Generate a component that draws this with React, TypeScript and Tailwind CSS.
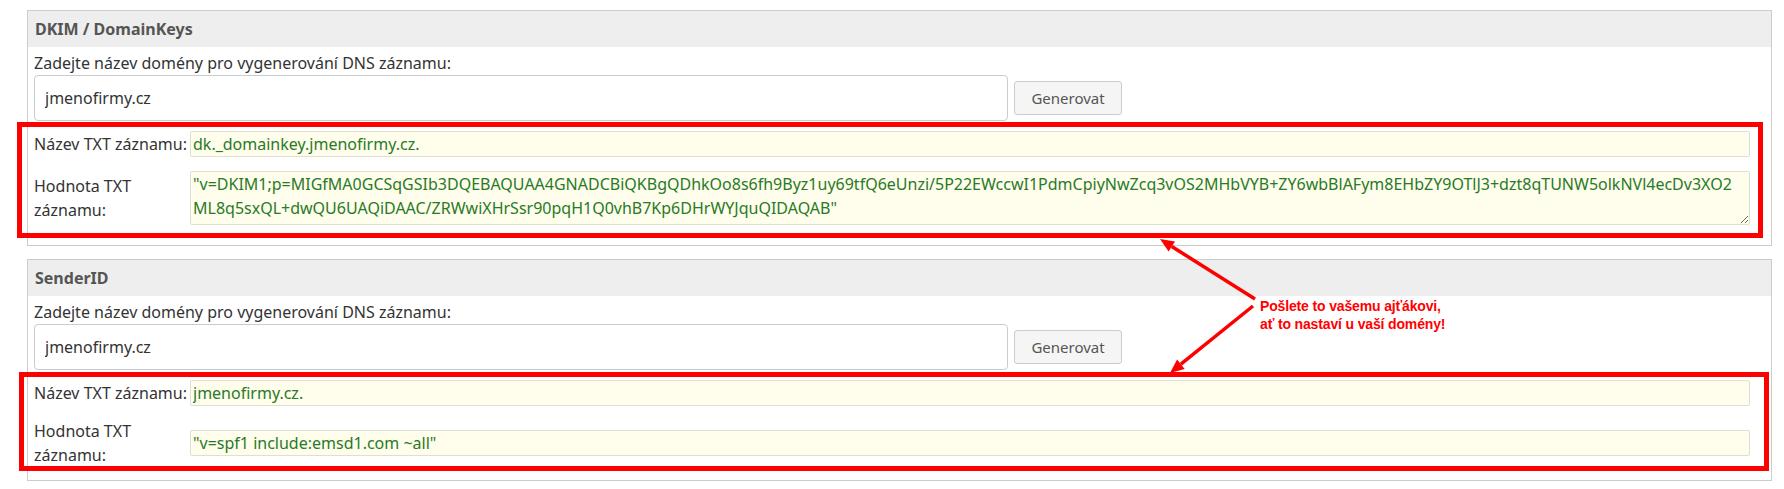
import React from 'react';

const DKIM_LINE_1 =
    '"v=DKIM1;p=MIGfMA0GCSqGSIb3DQEBAQUAA4GNADCBiQKBgQDhkOo8s6fh9Byz1uy69tfQ6eUnzi/5P22EWccwI1PdmCpiyNwZcq3vOS2MHbVYB+ZY6wbBlAFym8EHbZY9OTlJ3+dzt8qTUNW5olkNVl4ecDv3XO2';
const DKIM_LINE_2 = 'ML8q5sxQL+dwQU6UAQiDAAC/ZRWwiXHrSsr90pqH1Q0vhB7Kp6DHrWYJquQIDAQAB"';

function DomainPanel({ title, name, value, multiline }: { title: string; name: string; value: string; multiline?: boolean }) {
    return (
        <section className="border border-[#cccccc] bg-white">
            <div className="flex h-[36px] items-center bg-[#eeeeee] px-[7px] text-[16px] font-bold text-[#555555]">{title}</div>
            <div className={`pl-[6px] pr-[21px] pt-[5px] ${multiline ? 'pb-[20px]' : 'pb-[13px]'}`}>
                <div className="text-[16px] leading-[22px]">Zadejte název domény pro vygenerování DNS záznamu:</div>
                <div className="mt-px flex items-center gap-[6px]">
                    <input
                        readOnly
                        value="jmenofirmy.cz"
                        className="h-[46px] w-[974px] rounded-[4px] border border-[#cccccc] bg-white px-[10px] text-[16px] text-[#333333] outline-none"
                    />
                    <button className="h-[34px] w-[108px] rounded-[3px] border border-[#cccccc] bg-[#f5f5f5] text-[15px] text-[#555555]">Generovat</button>
                </div>

                {/* TXT record */}
                <div className="mt-[10px] flex items-center">
                    <label className="w-[156px] shrink-0 text-[16px] leading-[22px]">Název TXT záznamu:</label>
                    <input
                        readOnly
                        value={name}
                        className="h-[26px] flex-1 rounded-[2px] border border-[#e2e0cc] bg-[#fffdeb] px-[2px] text-[16px] text-[#287a28] outline-none"
                    />
                </div>
                <div className={`flex items-center ${multiline ? 'mt-[14px]' : 'mt-[13px]'}`}>
                    <label className="w-[156px] shrink-0 text-[16px] leading-[24px]">
                        Hodnota TXT
                        <br />
                        záznamu:
                    </label>
                    {multiline ? (
                        <textarea
                            readOnly
                            value={value}
                            className="h-[54px] flex-1 rounded-[2px] border border-[#e2e0cc] bg-[#fffdeb] px-[2px] py-0 text-[16px] leading-[24px] text-[#287a28] outline-none"
                        />
                    ) : (
                        <input
                            readOnly
                            value={value}
                            className="h-[26px] flex-1 rounded-[2px] border border-[#e2e0cc] bg-[#fffdeb] px-[2px] text-[16px] text-[#287a28] outline-none"
                        />
                    )}
                </div>
            </div>
        </section>
    );
}

export default function App() {
    return (
        <div className="relative h-[489px] w-[1784px] overflow-hidden bg-white pl-[27px] pr-[12px] pt-[10px] font-['Noto_Sans',sans-serif] text-[#333333]">
            <DomainPanel title="DKIM / DomainKeys" name="dk._domainkey.jmenofirmy.cz." value={DKIM_LINE_1 + '\n' + DKIM_LINE_2} multiline />
            <div className="mt-[13px]">
                <DomainPanel title="SenderID" name="jmenofirmy.cz." value={'"v=spf1 include:emsd1.com ~all"'} />
            </div>

            {/* annotation overlay */}
            <div className="pointer-events-none absolute left-[17px] top-[122px] h-[116px] w-[1746px] border-[5px] border-[#ff0000]" />
            <div className="pointer-events-none absolute left-[19px] top-[372px] h-[99px] w-[1750px] border-[5px] border-[#ff0000]" />
            <svg className="pointer-events-none absolute left-0 top-0" width="1784" height="489">
                <line x1="1255" y1="299" x2="1171.8" y2="246.5" stroke="#ff0000" strokeWidth="3.5" />
                <polygon points="1160,239 1175,241.4 1168.6,251.6" fill="#ff0000" />
                <line x1="1253" y1="306" x2="1180.9" y2="364.2" stroke="#ff0000" strokeWidth="3.5" />
                <polygon points="1170,373 1184.7,368.9 1177.1,359.5" fill="#ff0000" />
            </svg>
            <div className="absolute left-[1260px] top-[297px] font-['Liberation_Sans',Arial,sans-serif] text-[14px] font-bold leading-[18px] tracking-[-0.15px] text-[#ff0000]">
                Pošlete to vašemu ajťákovi,
                <br />
                ať to nastaví u vaší domény!
            </div>
        </div>
    );
}
